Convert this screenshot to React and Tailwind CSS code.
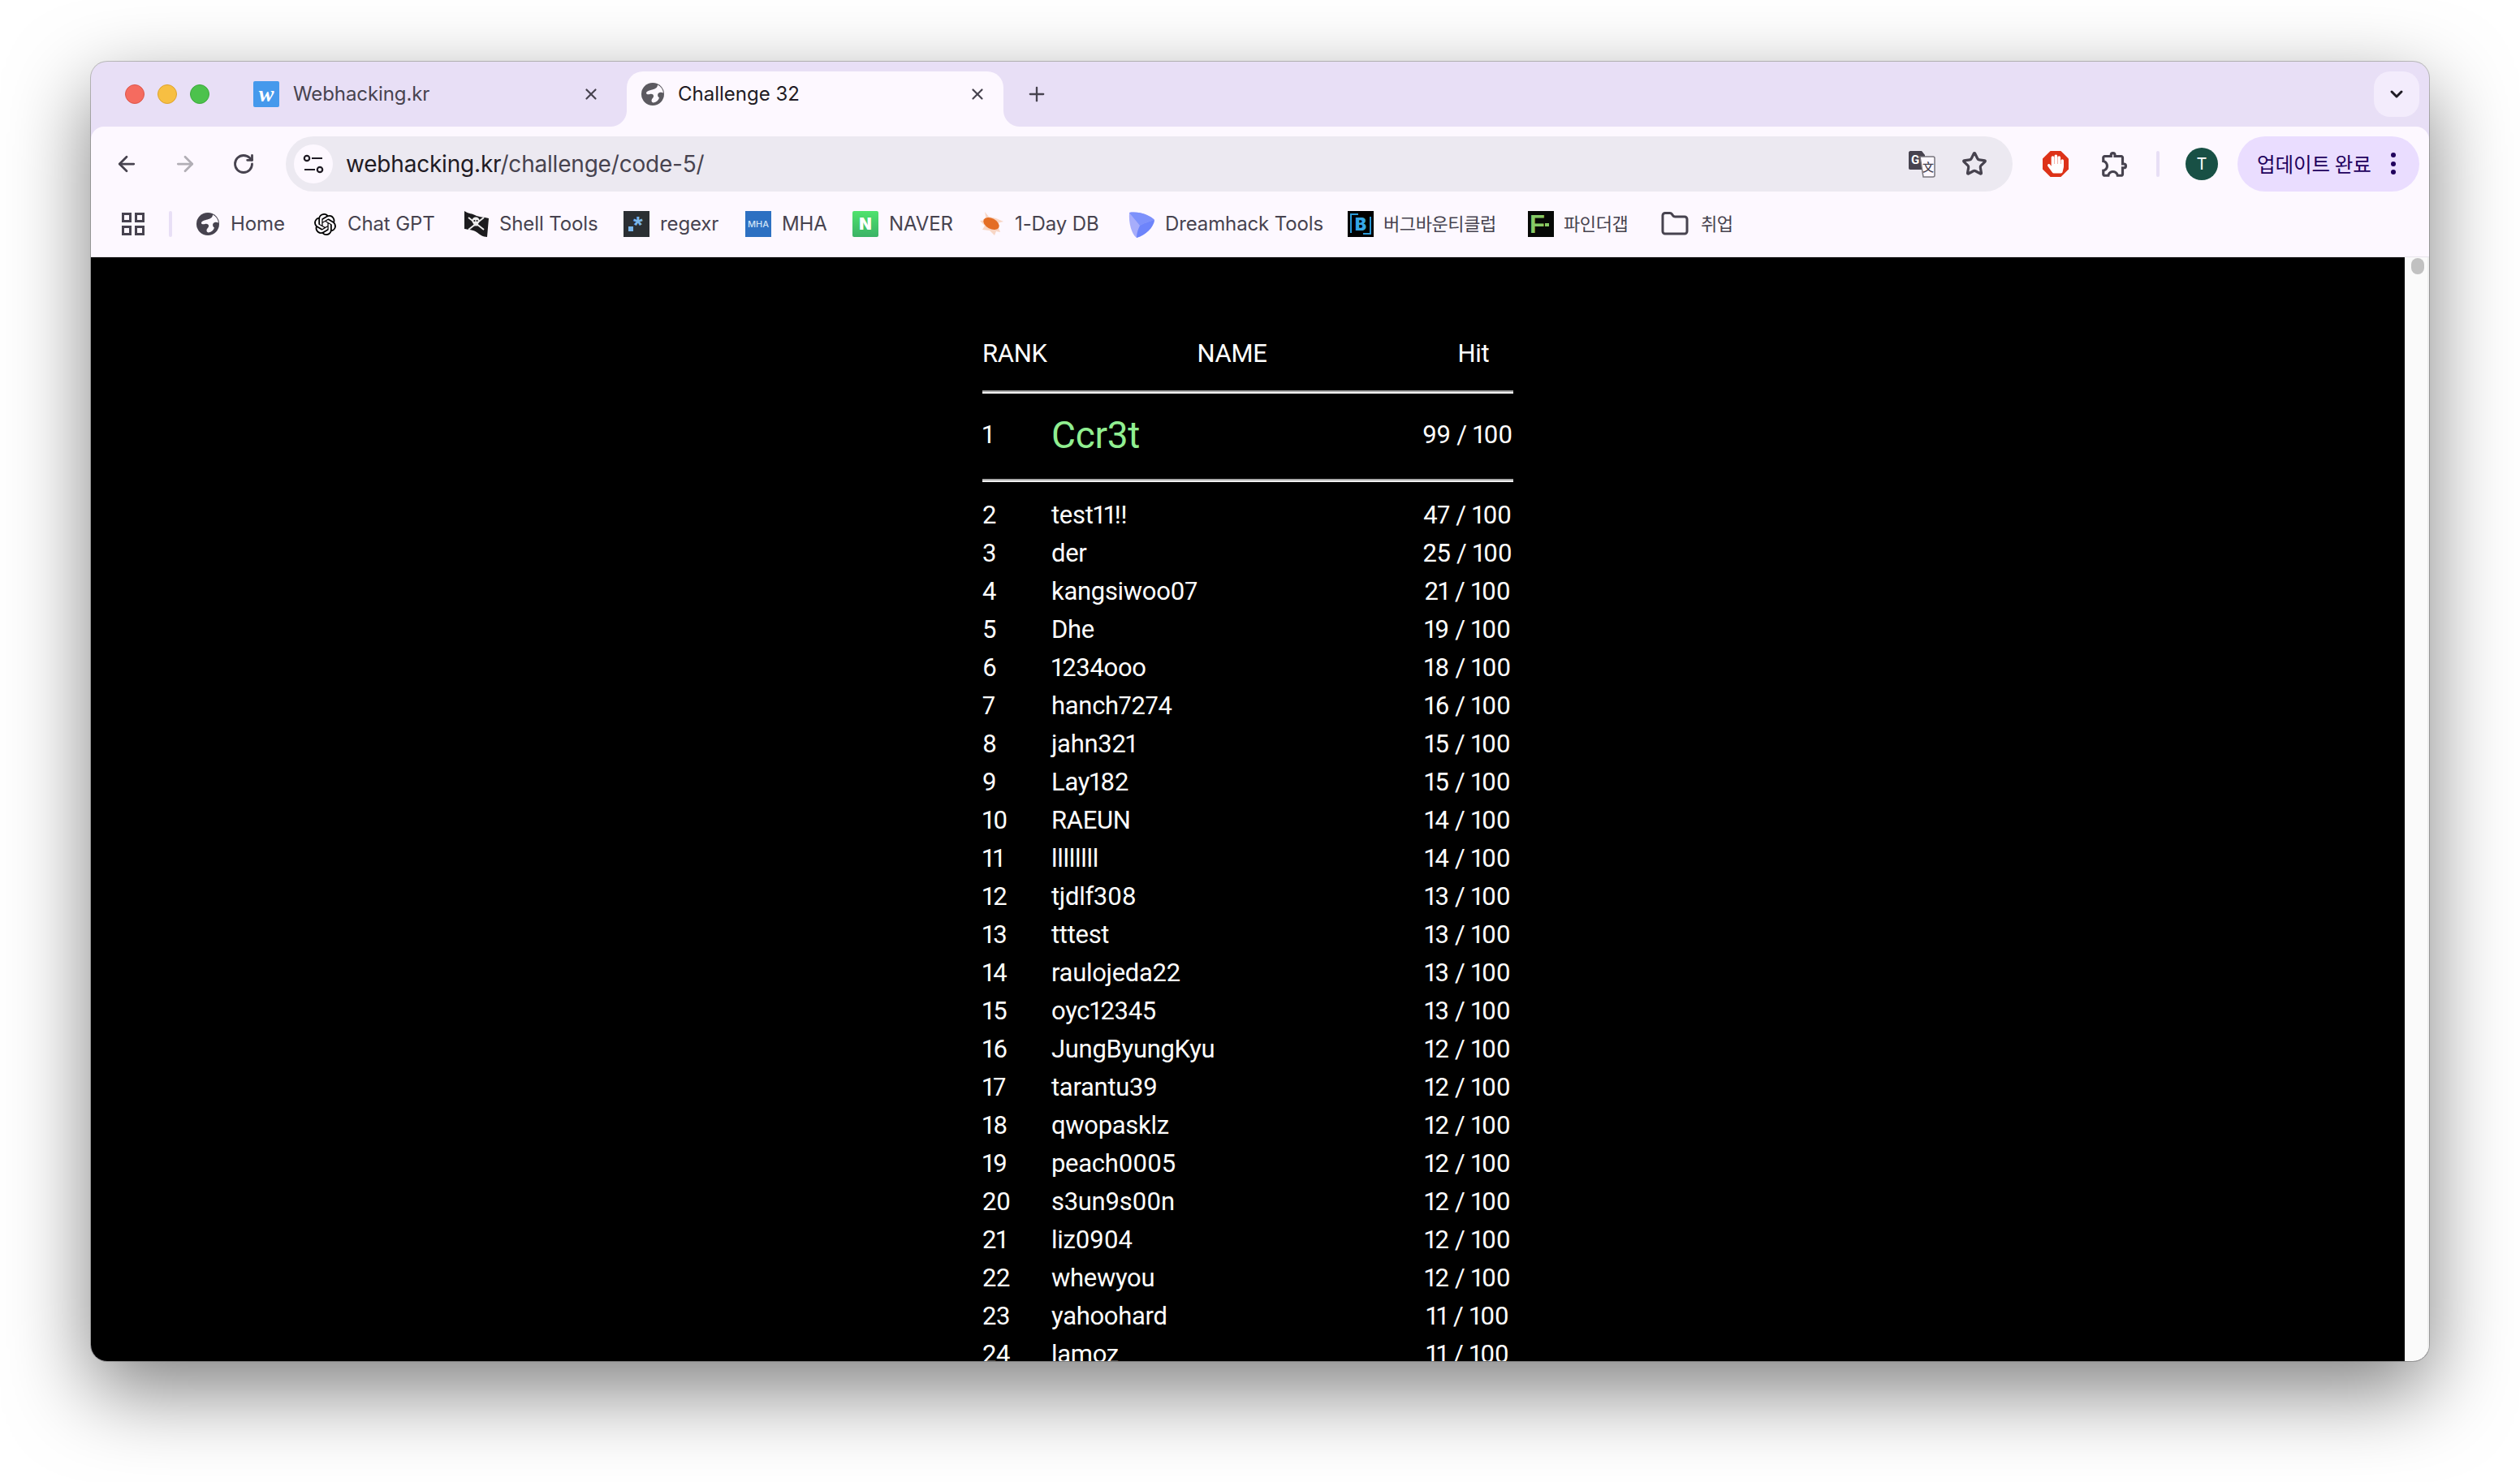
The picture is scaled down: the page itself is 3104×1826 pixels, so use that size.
import React from "react";
import { ArrowLeft, ArrowRight, RotateCw, Star, X, Plus, ChevronDown, Folder } from "lucide-react";
import { SiOpenai } from "react-icons/si";
import { MdOutlineExtension } from "react-icons/md";
import { FaHandPaper } from "react-icons/fa";

const rows = [
  [2, "test11!!", 47], [3, "der", 25], [4, "kangsiwoo07", 21], [5, "Dhe", 19], [6, "1234ooo", 18],
  [7, "hanch7274", 16], [8, "jahn321", 15], [9, "Lay182", 15], [10, "RAEUN", 14], [11, "llllllll", 14],
  [12, "tjdlf308", 13], [13, "tttest", 13], [14, "raulojeda22", 13], [15, "oyc12345", 13], [16, "JungByungKyu", 12],
  [17, "tarantu39", 12], [18, "qwopasklz", 12], [19, "peach0005", 12], [20, "s3un9s00n", 12], [21, "liz0904", 12],
  [22, "whewyou", 12], [23, "yahoohard", 11], [24, "lamoz", 11],
];

function Globe({ className }) {
  return (
    <svg viewBox="0 0 28 28" className={className}>
      <circle cx="14" cy="14" r="14" fill="currentColor" />
      <path d="M20 2.5C20 6 17 7.5 13.5 8.5C10 9.5 6.5 10 6 12.5C5.8 14 8 14.8 10.5 14C13 13.2 15.5 14.5 15 17C14.6 19 12.5 19.5 12.5 22C12.5 23.5 13.5 24.5 15 24.5C18.5 24 21 21.5 22 18.5C20.5 17.5 19.5 15.5 20.5 13.5C21.5 11.5 25 11 27 12.5C26.5 8 24 4.5 20 2.5Z" fill="#fdf8ff" />
    </svg>
  );
}

function Pirate() {
  return (
    <svg viewBox="0 0 32 34" className="w-[32px] h-[34px]">
      <path d="M1 1C7 5 11 4 14 6C19 9 25 8 31 10L29 33C24 33 20 30 16 27C12 24 6 24 1 23Z" fill="#1c1c1e" />
      <circle cx="15" cy="13" r="4.6" fill="#eee" />
      <rect x="12.5" y="16" width="5" height="3.4" fill="#eee" />
      <path d="M6 9L25 24M25 9L6 24" stroke="#eee" strokeWidth="1.9" />
      <circle cx="13.4" cy="13" r="1.1" fill="#1c1c1e" />
      <circle cx="16.6" cy="13" r="1.1" fill="#1c1c1e" />
    </svg>
  );
}

function Bookmark({ icon, label, className, labelClass = "" }) {
  return (
    <div className={"flex items-center shrink-0 " + className}>
      {icon}
      <span className={"whitespace-nowrap " + labelClass}>{label}</span>
    </div>
  );
}

export default function App() {
  return (
    <div className="w-[3104px] h-[1826px] bg-white overflow-hidden pt-[76px] pl-[112px] [font-family:Inter,'Noto_Sans_CJK_KR',sans-serif]">
      <div className="w-[2880px] h-[1601px] rounded-[20px] overflow-hidden flex flex-col bg-[#e8dff6] shadow-[0_36px_100px_rgba(0,0,0,0.5),0_0_0_1px_rgba(0,0,0,0.22)]">
        {/* Tab strip */}
        <div className="h-[80px] shrink-0 flex items-start pt-[12px]">
          <div className="flex items-center gap-[16px] pl-[42px] h-[56px]">
            <span className="w-[24px] h-[24px] rounded-full bg-[#f56b5f] border border-[#dc5549]" />
            <span className="w-[24px] h-[24px] rounded-full bg-[#f7bf42] border border-[#dda32e]" />
            <span className="w-[24px] h-[24px] rounded-full bg-[#4cc24c] border border-[#3ca83c]" />
          </div>
          <div className="ml-[42px] w-[472px] h-[56px] flex items-center pl-[12px] pr-[33px] text-[#47434f] text-[24px]">
            <span className="w-[32px] h-[32px] bg-[#4599ec] rounded-[2px] flex items-center justify-center text-white text-[28px] italic font-bold leading-none [font-family:'Liberation_Serif',serif]">w</span>
            <span className="ml-[17px] whitespace-nowrap tracking-[-0.1px]">Webhacking.kr</span>
            <X className="ml-auto w-[22px] h-[22px] text-[#47434f]" strokeWidth={2.4} />
          </div>
          <div className="relative w-[464px] h-[68px] bg-[#fdf8ff] rounded-t-[20px] flex items-center pl-[18px] pr-[21px] pb-[12px] text-[#1f1b24] text-[24px]">
            <span className="absolute left-[-20px] bottom-0 w-[20px] h-[20px] bg-[radial-gradient(circle_at_0_0,#e8dff6_19.5px,#fdf8ff_20.5px)]" />
            <span className="absolute right-[-20px] bottom-0 w-[20px] h-[20px] bg-[radial-gradient(circle_at_100%_0,#e8dff6_19.5px,#fdf8ff_20.5px)]" />
            <Globe className="w-[28px] h-[28px] text-[#5c5a60]" />
            <span className="ml-[17px] whitespace-nowrap">Challenge 32</span>
            <X className="ml-auto w-[22px] h-[22px] text-[#47434f]" strokeWidth={2.4} />
          </div>
          <div className="ml-[27px] h-[56px] flex items-center">
            <Plus className="w-[28px] h-[28px] text-[#47434f]" strokeWidth={2} />
          </div>
          <div className="ml-auto mr-[12px] w-[56px] h-[56px] rounded-[20px] bg-[#f3ecfc] flex items-center justify-center">
            <ChevronDown className="w-[24px] h-[24px] text-[#1f1b24]" strokeWidth={3} />
          </div>
        </div>

        {/* Toolbar + bookmarks */}
        <div className="shrink-0 rounded-t-[16px] bg-[#fdf8ff] border-b border-[#e8e4ec] h-[161px]">
          <div className="h-[92px] flex items-center pl-[8px]">
            <div className="w-[72px] flex justify-center"><ArrowLeft className="w-[30px] h-[30px] text-[#47434f]" strokeWidth={2.2} /></div>
            <div className="w-[72px] flex justify-center"><ArrowRight className="w-[30px] h-[30px] text-[#b1aeb5]" strokeWidth={2.2} /></div>
            <div className="w-[72px] flex justify-center"><RotateCw className="w-[28px] h-[28px] text-[#47434f]" strokeWidth={2.4} /></div>
            <div className="ml-[16px] w-[2127px] h-[68px] rounded-full bg-[#ece9f1] flex items-center pl-[10px] pr-[31px]">
              <div className="w-[48px] h-[48px] rounded-full bg-[#fdf8ff] flex items-center justify-center">
                <svg viewBox="0 0 26 26" className="w-[26px] h-[26px]" fill="none" stroke="#1f1b24" strokeWidth="2.2">
                  <circle cx="5" cy="6" r="3.2" />
                  <path d="M11 6H24M2 20H15" />
                  <circle cx="21" cy="20" r="3.2" />
                </svg>
              </div>
              <div className="ml-[16px] text-[28px] whitespace-nowrap tracking-[-0.2px]">
                <span className="text-[#1f1b24]">webhacking.kr</span>
                <span className="text-[#47434f]">/challenge/code-5/</span>
              </div>
              <div className="ml-auto flex items-center gap-[32px]">
                <svg viewBox="0 0 34 34" className="w-[34px] h-[34px]">
                  <path d="M3 1H17L21 6V24H3C1.5 24 1 23 1 22V3C1 2 2 1 3 1Z" fill="#47434f" />
                  <path d="M15 8H31C32 8 33 9 33 10V31C33 32 32 33 31 33H19Z" fill="#fdf8ff" stroke="#77747c" strokeWidth="1.5" />
                  <text x="4" y="17" fontSize="15" fontWeight="700" fill="#fff" fontFamily="Roboto, sans-serif">G</text>
                  <text x="18" y="26" fontSize="14" fontWeight="500" fill="#47434f" fontFamily="'Noto Sans CJK SC', sans-serif">文</text>
                </svg>
                <Star className="w-[32px] h-[32px] text-[#47434f]" strokeWidth={2.4} />
              </div>
            </div>
            <div className="ml-[17px] w-[72px] flex justify-center">
              <div className="relative w-[32px] h-[32px] bg-[#dd3218] [clip-path:polygon(30%_0,70%_0,100%_30%,100%_70%,70%_100%,30%_100%,0_70%,0_30%)] flex items-center justify-center">
                <FaHandPaper className="w-[20px] h-[24px] text-white" />
              </div>
            </div>
            <div className="w-[72px] flex justify-center">
              <MdOutlineExtension className="w-[38px] h-[38px] text-[#47434f] translate-x-[1px]" />
            </div>
            <div className="ml-[16px] w-[4px] h-[32px] rounded-full bg-[#e8dff6]" />
            <div className="ml-[32px] w-[40px] h-[40px] rounded-full bg-[#185045] flex items-center justify-center text-white text-[20px]">T</div>
            <div className="ml-[24px] w-[224px] h-[68px] rounded-full bg-[#eaddff] flex items-center pl-[24px] text-[#21005d] relative">
              <span className="text-[24.5px] whitespace-nowrap [font-family:'Noto_Sans_CJK_KR',sans-serif]">업데이트 완료</span>
              <div className="absolute left-[189px] top-[20px] flex flex-col gap-[4.5px]">
                <span className="w-[6px] h-[6px] rounded-full bg-[#21005d]" />
                <span className="w-[6px] h-[6px] rounded-full bg-[#21005d]" />
                <span className="w-[6px] h-[6px] rounded-full bg-[#21005d]" />
              </div>
            </div>
          </div>

          <div className="h-[56px] flex items-center pl-[38px] text-[24px] text-[#47434f] tracking-[-0.12px]">
            <div className="w-[28px] h-[28px] grid grid-cols-2 gap-[4px] shrink-0">
              <span className="border-[3px] border-[#47434f]" />
              <span className="border-[3px] border-[#47434f]" />
              <span className="border-[3px] border-[#47434f]" />
              <span className="border-[3px] border-[#47434f]" />
            </div>
            <span className="ml-[30px] mr-[30px] w-[4px] h-[32px] rounded-full bg-[#e8dff6] shrink-0" />
            <Bookmark className="w-[145px]" icon={<Globe className="w-[28px] h-[28px] mr-[14px] text-[#47434f]" />} label="Home" />
            <Bookmark className="w-[184px]" icon={<SiOpenai className="w-[27px] h-[27px] mr-[14px] text-black" />} label="Chat GPT" />
            <Bookmark className="w-[197px]" icon={<span className="mr-[12px]"><Pirate /></span>} label="Shell Tools" />
            <Bookmark className="w-[150px]" icon={
              <span className="relative w-[32px] h-[32px] mr-[13px] bg-[#2b2f33] block overflow-hidden">
                <span className="absolute left-[6px] bottom-[7px] w-[6px] h-[6px] bg-[#7ab6ea]" />
                <span className="absolute left-[12px] top-[-1px] text-[#7ab6ea] text-[30px] font-bold leading-[36px] [font-family:'Liberation_Sans',sans-serif]">*</span>
              </span>
            } label="regexr" />
            <Bookmark className="w-[132px]" icon={
              <span className="w-[32px] h-[32px] mr-[13px] bg-[#2d70c2] flex items-center justify-center text-[#cfe3f7] text-[11px] font-medium tracking-[0px]">MHA</span>
            } label="MHA" />
            <Bookmark className="w-[157px]" icon={
              <span className="w-[32px] h-[32px] mr-[13px] rounded-[2px] bg-[linear-gradient(#4fe36d,#3bb266)] flex items-center justify-center text-white text-[20px] font-black">N</span>
            } label="NAVER" />
            <Bookmark className="w-[183px]" icon={
              <svg viewBox="0 0 30 30" className="w-[30px] h-[30px] mr-[13px]">
                <path d="M6 0L11 6L20 8L29 12L21 14L25 25L20 24L18 29L12 23L3 22L6 17L0 11L8 10Z" fill="#f6cdb6" opacity="0.8" />
                <ellipse cx="14" cy="14.5" rx="10.5" ry="6.5" transform="rotate(28 14 14.5)" fill="#e46d24" />
              </svg>
            } label="1-Day DB" />
            <Bookmark className="w-[270px]" icon={
              <svg viewBox="0 0 32 33" className="w-[32px] h-[33px] mr-[13px]">
                <path d="M1 2C14 0 27 6 32 11C31 20 21 30 10 33C4 29 0 15 1 2Z" fill="#a7adfb" />
                <path d="M1 2C14 0 27 6 32 11C26 13 18 15 14 18C10 13 5 7 1 2Z" fill="#7d91fb" />
                <path d="M32 11C31 20 21 30 10 33C10 27 12 22 14 18C18 15 26 13 32 11Z" fill="#6d84fb" />
              </svg>
            } label="Dreamhack Tools" />
            <Bookmark className="w-[222px]" labelClass="text-[22px] tracking-[-0.4px]" icon={
              <span className="relative w-[32px] h-[32px] mr-[12px] bg-black block overflow-hidden">
                <span className="absolute left-[3px] top-[3px] w-[10px] h-[24px] border-l-2 border-t-2 border-[#2c9ad8]" />
                <span className="absolute right-[3px] bottom-[3px] w-[10px] h-[22px] border-r-2 border-b-2 border-[#2c9ad8]" />
                <span className="absolute inset-0 flex items-center justify-center text-[#35a7e6] text-[21px] font-black leading-none">B</span>
              </span>
            } label="버그바운티클럽" />
            <Bookmark className="w-[165px]" labelClass="text-[22px] tracking-[-0.4px]" icon={
              <span className="relative w-[32px] h-[32px] mr-[12px] bg-[#060806] flex items-center justify-center text-[#86c965] text-[31px] font-black leading-none [font-family:'Liberation_Sans',sans-serif]">
                <span className="-ml-[9px]">F</span>
                <span className="absolute right-[6px] top-[15px] w-[5px] h-[4px] bg-[#86c965]" />
              </span>
            } label="파인더갭" />
            <Bookmark className="w-[120px]" labelClass="text-[22px] tracking-[-0.4px]" icon={
              <Folder className="w-[36px] h-[36px] mr-[14px] -ml-[2px] text-[#47434f]" strokeWidth={2} />
            } label="취업" />
          </div>
        </div>

        {/* Page */}
        <div className="flex-1 min-h-0 flex bg-black overflow-hidden">
          <div className="flex-1 pt-[95px] text-white text-[31px] tracking-[-0.3px] proportional-nums [font-family:Roboto,sans-serif]">
            <div className="w-[654px] mx-auto">
              <div className="flex h-[47px] leading-[47px]">
                <div className="w-[85px]">RANK</div>
                <div className="w-[445px] text-center">NAME</div>
                <div className="flex-1 text-center pl-[26px]">Hit</div>
              </div>
              <div className="mt-[22px] h-[4px] border-t-2 border-[#a8a8a8] border-b-2 border-b-[#f0f0f0]" />
              <div className="flex h-[105px] items-center pb-[3px]">
                <div className="w-[85px]">1</div>
                <div className="flex-1 text-[46px] text-[#90ee90]">Ccr3t</div>
                <div className="w-[113px] text-center">99 / 100</div>
              </div>
              <div className="h-[4px] border-t-2 border-[#a8a8a8] border-b-2 border-b-[#f0f0f0]" />
              <div className="pt-[17px]">
                {rows.map(([rank, name, hit]) => (
                  <div key={rank} className="flex h-[47px] leading-[47px]">
                    <div className="w-[85px]">{rank}</div>
                    <div className="flex-1">{name}</div>
                    <div className="w-[113px] text-center">{hit} / 100</div>
                  </div>
                ))}
              </div>
            </div>
          </div>
          <div className="w-[30px] shrink-0 bg-[#fafafa] border-r-2 border-[#f0f0f0] pl-[8px]">
            <div className="w-[16px] h-[20px] rounded-full bg-[#c1c1c1] mt-[1px]" />
          </div>
        </div>
      </div>
    </div>
  );
}
